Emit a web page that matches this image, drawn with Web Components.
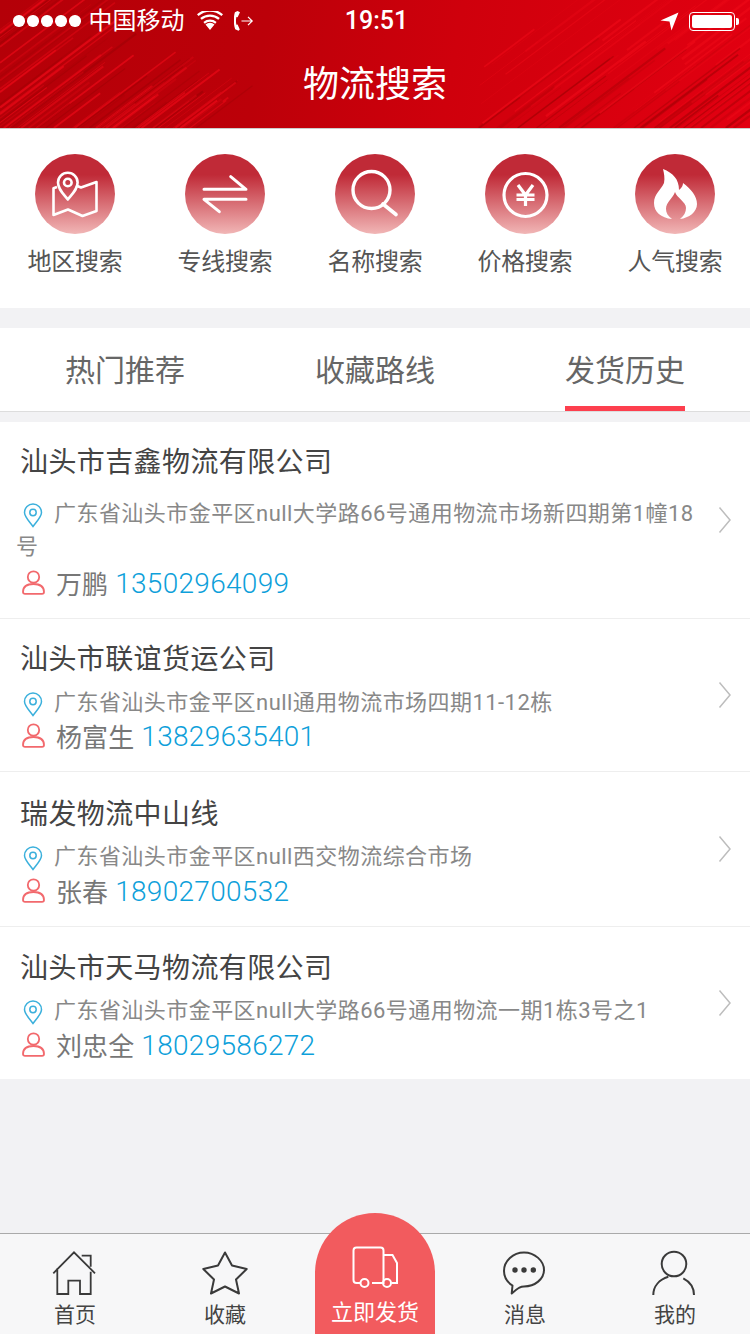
<!DOCTYPE html>
<html lang="zh-CN"><head><meta charset="utf-8"><title>物流搜索</title>
<style>
html,body{margin:0;padding:0}
body{width:750px;height:1334px;overflow:hidden;background:#f2f2f4;display:flex;flex-direction:column;font-family:Roboto,"Noto Sans CJK SC",sans-serif}
main{flex:1;min-height:0;display:flex;flex-direction:column}
</style></head><body>
<app-header title-text="物流搜索"></app-header>
<main>
<search-grid>
  <search-item label="地区搜索" icon="map"></search-item>
  <search-item label="专线搜索" icon="swap"></search-item>
  <search-item label="名称搜索" icon="search"></search-item>
  <search-item label="价格搜索" icon="yen"></search-item>
  <search-item label="人气搜索" icon="fire"></search-item>
</search-grid>
<tab-strip>
  <tab-label>热门推荐</tab-label>
  <tab-label>收藏路线</tab-label>
  <tab-label active>发货历史</tab-label>
</tab-strip>
<company-list>
  <company-card name="汕头市吉鑫物流有限公司" person="万鹏" phone="13502964099" style="--pad-top:21px;--addr-gap:14px;--person-gap:2px;--pad-bottom:17px">广东省汕头市金平区null大学路66号通用物流市场新四期第1幢18号</company-card>
  <company-card name="汕头市联谊货运公司" person="杨富生" phone="13829635401" style="--pad-top:21px;--addr-gap:6px;--person-gap:-1px;--pad-bottom:17px">广东省汕头市金平区null通用物流市场四期11-12栋</company-card>
  <company-card name="瑞发物流中山线" person="张春" phone="18902700532" style="--pad-top:23px;--addr-gap:5px;--pad-bottom:17px">广东省汕头市金平区null西交物流综合市场</company-card>
  <company-card name="汕头市天马物流有限公司" person="刘忠全" phone="18029586272" style="--pad-top:22px;--addr-gap:5px;--pad-bottom:16px" last>广东省汕头市金平区null大学路66号通用物流一期1栋3号之1</company-card>
</company-list>
</main>
<bottom-nav>
  <nav-item label="首页" icon="home"></nav-item>
  <nav-item label="收藏" icon="star"></nav-item>
  <nav-item label="立即发货" icon="truck" primary></nav-item>
  <nav-item label="消息" icon="chat"></nav-item>
  <nav-item label="我的" icon="user"></nav-item>
</bottom-nav>
<script>
const CJK='Roboto,"Noto Sans CJK SC",sans-serif';
class Base extends HTMLElement{
  render(html){ if(!this.shadowRoot) this.attachShadow({mode:'open'}); this.shadowRoot.innerHTML=html; }
}
class AppHeader extends Base{
  connectedCallback(){
    let seed=7; const r=()=>{seed=(seed*16807)%2147483647;return seed/2147483647};
    let lines='';
    for(let i=0;i<90;i++){
      const x=-130+r()*330, w=.5+r()*1.8, o=.2+r()*.5;
      const c=r()<.7?'#ee0a18':'#a00006';
      const sx=x<0?0:x, sy=x<0?128+x*.75:128;
      const k=30+r()*110*(1-Math.max(0,x)/260);
      lines+=`<line x1="${sx.toFixed(1)}" y1="${sy.toFixed(1)}" x2="${(sx+k).toFixed(1)}" y2="${(sy-k*.75).toFixed(1)}" stroke="${c}" stroke-width="${w.toFixed(1)}" opacity="${o.toFixed(2)}"/>`;
    }
    for(let i=0;i<80;i++){
      const x=470+r()*300, w=.5+r()*2.2, o=.2+r()*.5;
      const low=r()<.55; const c=low?'#a80006':'#ee0a18';
      const k=40+r()*120;
      const sy=low?128:40+r()*88;
      lines+=`<line x1="${x.toFixed(1)}" y1="${sy.toFixed(1)}" x2="${(x+k).toFixed(1)}" y2="${(sy-k*.75).toFixed(1)}" stroke="${c}" stroke-width="${w.toFixed(1)}" opacity="${o.toFixed(2)}"/>`;
    }
    this.render(`<style>
    :host{display:block;position:relative;height:128px;color:#fff;overflow:hidden;flex:none;
      background:linear-gradient(100deg,#b40008 0%,#bc0009 35%,#cf000c 60%,#e20011 100%);font-family:${CJK}}
    .bg{position:absolute;inset:0;width:750px;height:128px}
    .wrap{position:relative;display:flex;flex-direction:column;height:128px}
    h1{margin:0;height:88px;line-height:90px;text-align:center;font-size:36px;font-weight:400}
    </style><svg class="bg" viewBox="0 0 750 128" aria-hidden="true">${lines}</svg>
    <div class="wrap"><status-bar></status-bar><h1>${this.getAttribute('title-text')}</h1></div>`);
  }
}
class StatusBar extends Base{
  connectedCallback(){
    this.render(`<style>
    :host{display:grid;grid-template-columns:1fr auto 1fr;height:40px;align-items:center;color:#fff;flex:none;font-family:${CJK}}
    .l{display:flex;align-items:center;padding-left:13px}
    .dots{display:flex;gap:2.5px;margin-right:8px}
    .dots i{width:11.5px;height:11.5px;border-radius:50%;background:#fff;display:block}
    .c{font-size:24px;line-height:42px}
    .t{font-size:25px;font-weight:500;line-height:42px;padding-left:3px}
    .r{display:flex;justify-content:flex-end;align-items:center;padding-right:11px}
    svg{display:block}
    .bat{width:46px;height:19px;border:1px solid #fff;border-radius:4px;box-sizing:border-box;padding:2px;margin-left:10px}
    .bat i{display:block;height:100%;background:#fff;border-radius:2px}
    .nub{width:3px;height:7px;background:#fff;border-radius:0 2px 2px 0;margin-left:1px}
    </style>
    <div class="l"><div class="dots"><i></i><i></i><i></i><i></i><i></i></div><span class="c">中国移动</span>
      <svg style="margin-left:12px" width="26" height="20" viewBox="0 0 26 20"><path d="M13 19 8.500 13.500a6.800 6.800 0 0 1 9 0zM6.400 11a10.300 10.300 0 0 1 13.200 0l-1.400 1.700a8 8 0 0 0-10.400 0zM3.200 7a15.300 15.300 0 0 1 19.600 0l-1.500 1.800a13 13 0 0 0-16.600 0zM0 3.200a20 20 0 0 1 26 0l-1.500 1.800a17.700 17.700 0 0 0-23 0z" fill="#fff"/></svg>
      <svg style="margin-left:11px" width="20" height="20" viewBox="0 0 20 20"><path d="M3.500 0 .9 1.300C-.6 6 -.6 13.500 1.200 18.300l3.300 1.400 1.300-1.300-2.200-5-1.200.3c-.6-2.400-.6-5.300 0-7.700l1.200.2L6 1.300z" fill="#fff"/><path d="M7.500 10h10.500M14 5.800l4.200 4.200-4.200 4.200" fill="none" stroke="#fff" stroke-width="1.200"/></svg>
    </div>
    <div class="t">19:51</div>
    <div class="r">
      <svg width="19" height="19" viewBox="0 0 19 19"><path d="M.5 8.500 18.500.5 11.500 18.500 9.500 9.500z" fill="#fff"/></svg>
      <div class="bat"><i></i></div><div class="nub"></div>
    </div>`);
  }
}
const CIRCLE_ICONS={
 map:`<path d="M22 33 18.500 34.200V61L33 55.500 47.500 62 61.500 57V28L46 33.500 41 31.500" fill="none" stroke="#fff" stroke-width="2.600" stroke-linejoin="round"/><path d="M32.800 45.500C28 39.500 23 35 23 28.500a9.800 9.800 0 0 1 19.600 0C42.600 35 37.600 39.500 32.800 45.500z" fill="none" stroke="#fff" stroke-width="2.600" stroke-linejoin="round"/><circle cx="32.800" cy="28.500" r="3.800" fill="none" stroke="#fff" stroke-width="2.600"/>`,
 swap:`<path d="M19 35.300H61L45.700 22.700M61 45.300H19L34.300 57.700" fill="none" stroke="#fff" stroke-width="3" stroke-linecap="round" stroke-linejoin="round"/>`,
 search:`<circle cx="36.500" cy="36" r="18.500" fill="none" stroke="#fff" stroke-width="3.400"/><path d="M48 50 61 60.500" fill="none" stroke="#fff" stroke-width="3.600" stroke-linecap="round"/>`,
 yen:`<circle cx="40.500" cy="41" r="21.500" fill="none" stroke="#fff" stroke-width="3.200"/><path d="M33 31 40.500 41 48 31M31.500 41H49.500M31.500 45.500H49.500M40.500 41V52" fill="none" stroke="#fff" stroke-width="3.200"/>`,
 fire:`<path d="M28 15C38 19 44 25 44 36 47 34 48 31 48 29 56 35 62 42 62 50 62 58 54 64 45 65 49 62 51 58 51 54 51 48 42 44 40 38 38 44 31 48 31 55 31 59 33 62 37 65 26 64 19 58 19 49 19 40 26 36 29 29 30 24 29 19 28 15Z" fill="#fff"/>`
};
class SearchGrid extends Base{
  connectedCallback(){this.render(`<style>:host{display:grid;grid-template-columns:repeat(5,150px);height:180px;box-sizing:border-box;border-top:1px solid #ccc;background:#fff;margin-bottom:20px;flex:none}</style><slot></slot>`)}
}
class SearchItem extends Base{
  connectedCallback(){this.render(`<style>
    :host{display:flex;flex-direction:column;align-items:center;padding-top:25px;font-family:${CJK}}
    .c{width:80px;height:80px;border-radius:50%;background:linear-gradient(#c02a37 0%,#c02a37 26%,#f1b6b6 100%)}
    svg{display:block}
    span{margin-top:11px;font-size:24px;line-height:34px;color:#555;letter-spacing:-.2px}
    </style><div class="c"><svg width="80" height="80" viewBox="0 0 80 80">${CIRCLE_ICONS[this.getAttribute('icon')]}</svg></div><span>${this.getAttribute('label')}</span>`)}
}
class TabStrip extends Base{
  connectedCallback(){this.render(`<style>:host{display:grid;grid-template-columns:repeat(3,250px);height:83px;background:#fff;border-bottom:1px solid #ddd;margin-bottom:10px;flex:none}</style><slot></slot>`)}
}
class TabLabel extends Base{
  connectedCallback(){this.render(`<style>
    :host{display:flex;justify-content:center;font-family:${CJK}}
    div{width:120px;height:83px;box-sizing:border-box;text-align:center;font-size:30px;line-height:86px;color:#666;white-space:nowrap}
    :host([active]) div{border-bottom:5px solid #fd3f4e}
    </style><div><slot></slot></div>`)}
}
class CompanyList extends Base{
  connectedCallback(){this.render(`<style>:host{display:block;background:#fff}</style><slot></slot>`)}
}
class CompanyCard extends Base{
  connectedCallback(){
    const g=k=>this.getAttribute(k);
    this.render(`<style>
    :host{display:flex;align-items:center;background:#fff;border-bottom:1px solid #eee;font-family:${CJK}}
    :host([last]){border-bottom:0}
    .b{flex:none;width:686px;box-sizing:border-box;padding:var(--pad-top,19px) 0 var(--pad-bottom,16px) 16px}
    h2{margin:0 0 var(--addr-gap,8px) 4px;font-size:28px;line-height:40px;font-weight:400;color:#444;letter-spacing:.4px}
    .a{font-size:22px;line-height:33px;color:#888;letter-spacing:.45px;word-break:break-all;margin-right:-12px}
    .pin{display:inline-block;vertical-align:-7px;margin:0 11px 0 7px}
    .p{display:flex;align-items:center;height:36px;margin:var(--person-gap,0) 0 0 6px;font-size:26px;color:#777}
    .p svg{margin-right:11px;flex:none;position:relative;top:-1px}
    .n{letter-spacing:.1px;margin-right:8px;position:relative;top:-1px}
    .t{color:#0e9fda;font-size:28px;font-weight:300;letter-spacing:.3px;margin-left:-1px}
    .ch{flex:none;margin-left:32px}
    </style>
    <div class="b"><h2>${g('name')}</h2>
    <div class="a"><svg class="pin" width="20" height="25" viewBox="0 0 20 25"><path d="M10 23.500C6.500 18.500 1.500 14 1.500 9.500a8.500 8.500 0 0 1 17 0C18.500 14 13.500 18.500 10 23.500z" fill="none" stroke="#3bb0dc" stroke-width="1.500"/><circle cx="10" cy="9.500" r="3.200" fill="none" stroke="#3bb0dc" stroke-width="1.500"/></svg><slot></slot></div>
    <div class="p"><svg width="23" height="25" viewBox="0 0 23 25"><circle cx="11.500" cy="7" r="5.700" fill="none" stroke="#f2696d" stroke-width="1.800"/><path d="M1 22c0-5.500 4.500-8 10.500-8S22 16.500 22 22c0 1.200-.8 1.800-2 1.800H3C1.800 23.800 1 23.200 1 22z" fill="none" stroke="#f2696d" stroke-width="1.800"/></svg><span class="n">${g('person')}</span><span class="t">${g('phone')}</span></div></div>
    <svg class="ch" width="14" height="28" viewBox="0 0 14 28"><path d="M1.500 1.500 12 14 1.500 26.500" fill="none" stroke="#bdbdbd" stroke-width="1.500"/></svg>`);
  }
}
const NAV_ICONS={
 home:`<path d="M2.300 23.300 23 2.300 44 23.300M30.700 5.700H39.700V16.700M6.300 18.300V44H17.300V30.700H29V44H39.700V21.700" fill="none" stroke="#3a3a3a" stroke-width="1.800"/>`,
 star:`<path d="M24 2.500 31 15.500 45.700 19 35 29.500 38 43.500 24 36.500 10 43.500 13 29.500 2.300 19 17 15.500Z" fill="none" stroke="#3a3a3a" stroke-width="2" stroke-linejoin="round"/>`,
 chat:`<path d="M10.700 43.500 11.500 35.500C6 32 3 27 3 21 3 11 12 2.500 23 2.500S43 11 43 20 34 36.500 23 36.500C20 36.500 18 37 10.700 43.500Z" fill="none" stroke="#3a3a3a" stroke-width="2" stroke-linejoin="round"/><circle cx="14" cy="20" r="2.700" fill="#3a3a3a"/><circle cx="23" cy="20" r="2.700" fill="#3a3a3a"/><circle cx="32.300" cy="20" r="2.700" fill="#3a3a3a"/>`,
 user:`<circle cx="23" cy="14" r="12.300" fill="none" stroke="#3a3a3a" stroke-width="2"/><path d="M2.300 45C2.300 36 8.500 29.500 17.300 26.700M32.300 28.300C38.500 31.500 43 37 43 45" fill="none" stroke="#3a3a3a" stroke-width="2"/>`,
 truck:`<path d="M8 37H4.500C2.500 37 1.500 36 1.500 34V4.500C1.500 2.500 2.500 1.500 4.500 1.500H28.500C30.500 1.500 31.500 2.500 31.500 4.500V37H20M31.500 9H40.500L45 17V37H39.500M31.500 37H32" fill="none" stroke="#fff" stroke-width="2"/><circle cx="12.500" cy="37" r="4" fill="none" stroke="#fff" stroke-width="2"/><circle cx="35" cy="37" r="4" fill="none" stroke="#fff" stroke-width="2"/>`
};
class BottomNav extends Base{
  connectedCallback(){this.render(`<style>:host{display:grid;grid-template-columns:repeat(5,150px);height:100px;background:#f7f7f8;border-top:1px solid #aaa;flex:none}</style><slot></slot>`)}
}
class NavItem extends Base{
  connectedCallback(){
    const p=this.hasAttribute('primary');
    this.render(`<style>
    :host{display:flex;flex-direction:column;align-items:center;font-family:${CJK};color:#444;padding-top:16px;box-sizing:border-box;height:100px}
    :host([primary]){margin:-21px 15px 0;height:121px;padding-top:33px;background:#f25b5e;border-radius:60px 60px 0 0;color:#fff}
    svg{display:block;flex:none}
    span{font-size:21px;line-height:28px;margin-top:5px;white-space:nowrap}
    :host([primary]) span{font-size:22px;margin-top:11px}
    </style><svg width="${p?47:48}" height="${p?42:46}" viewBox="0 0 ${p?47:48} ${p?42:46}">${NAV_ICONS[this.getAttribute('icon')]}</svg><span>${this.getAttribute('label')}</span>`);
  }
}
customElements.define('status-bar',StatusBar);
customElements.define('app-header',AppHeader);
customElements.define('search-grid',SearchGrid);
customElements.define('search-item',SearchItem);
customElements.define('tab-strip',TabStrip);
customElements.define('tab-label',TabLabel);
customElements.define('company-list',CompanyList);
customElements.define('company-card',CompanyCard);
customElements.define('bottom-nav',BottomNav);
customElements.define('nav-item',NavItem);
</script>
</body></html>
